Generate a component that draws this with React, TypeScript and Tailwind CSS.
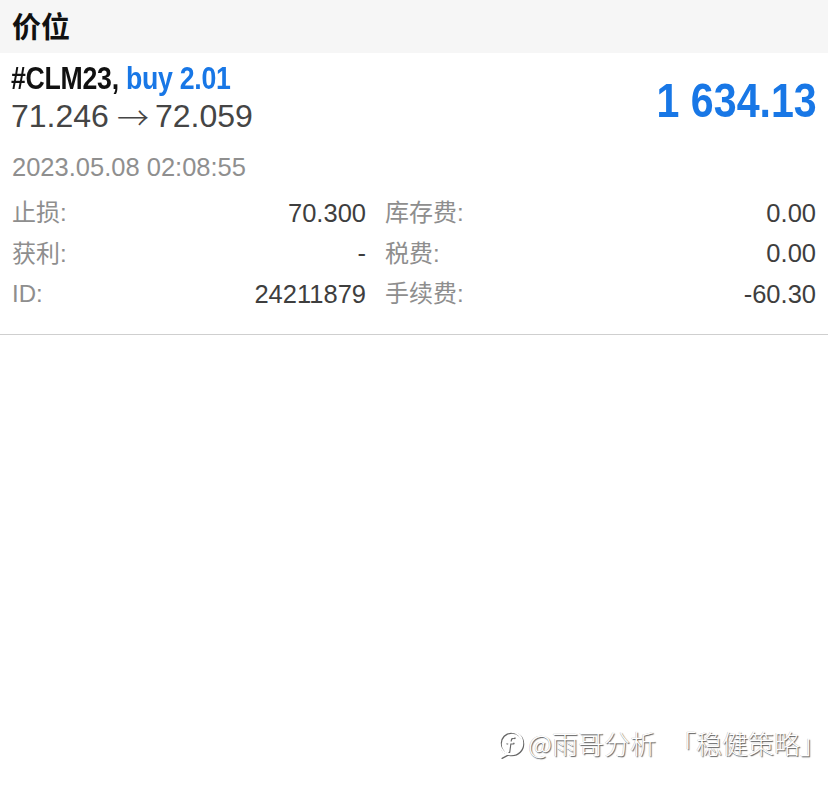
import React from "react";

const sans = "font-['Liberation_Sans','Noto_Sans_CJK_SC',sans-serif]";

const rows = [
  { l1: "止损:", v1: "70.300", l2: "库存费:", v2: "0.00" },
  { l1: "获利:", v1: "-", l2: "税费:", v2: "0.00" },
  { l1: "ID:", v1: "24211879", l2: "手续费:", v2: "-60.30" },
];

const WatermarkLogo = () => (
  <svg width="30" height="34" viewBox="0 0 28 30" fill="none" className="drop-shadow-[1px_1px_0.5px_rgba(0,0,0,0.6)]">
    <path
      d="M9 24.5c-3.5-2-5.5-5.5-5.5-9.5C3.5 9 8 4.5 14 4.5S24.5 9 24.5 15 20 25.5 14 25.5c-1.2 0-2.3-.2-3.3-.5L5 28l2.5-4.2"
      stroke="white"
      strokeWidth="1.9"
      strokeLinejoin="round"
      strokeLinecap="round"
    />
    <path
      d="M16.5 9.5c-1.8-.6-3.4.3-3.6 2.3L11.5 22.5M9.5 14.5h6"
      stroke="white"
      strokeWidth="1.9"
      strokeLinecap="round"
    />
  </svg>
);

export default function App() {
  return (
    <div className={`relative w-[828px] h-[790px] bg-white ${sans}`}>
      <div className="h-[53px] bg-[#f6f6f6] flex items-center px-[12px] pt-[3px]">
        <span className="text-[29px] font-bold text-[#111] leading-none">价位</span>
      </div>

      <div className="flex justify-between items-start px-[11px] pt-[9px]">
        <div className="flex flex-col">
          <div className="h-[32px] flex items-center">
            <span className="inline-block origin-left scale-x-[0.86] whitespace-nowrap text-[31px] font-bold leading-none tracking-[-0.3px]">
              <span className="text-[#111]">#CLM23, </span>
              <span className="text-[#1877e6]">buy 2.01</span>
            </span>
          </div>
          <div className="h-[44px] flex items-center text-[32px] text-[#454545] leading-none whitespace-nowrap">
            <span>71.246</span>
            <span className="font-['Noto_Sans_CJK_SC',sans-serif] font-light text-[32px] ml-[8px] mr-[6px]">→</span>
            <span>72.059</span>
          </div>
        </div>
        <div className="h-[76px] flex items-center">
          <span className="inline-block origin-right scale-x-[0.84] text-[49px] font-bold text-[#1877e6] leading-none whitespace-nowrap">
            1 634.13
          </span>
        </div>
      </div>

      <div className="px-[12px] pt-[14px] h-[46px] flex items-center text-[25.5px] text-[#8f8f8f] leading-none">
        2023.05.08 02:08:55
      </div>

      <div className="flex flex-col px-[12px] pt-[9px] pb-[19px] border-b border-[#cfcfcf]">
        {rows.map((r) => (
          <div key={r.l1} className="h-[40.5px] grid grid-cols-[354px_1fr] items-center text-[24px] leading-none">
            <div className="flex justify-between items-center">
              <span className="text-[#8e8e8e]">{r.l1}</span>
              <span className="text-[#3e3e3e] text-[25.5px]">{r.v1}</span>
            </div>
            <div className="flex justify-between items-center pl-[19px]">
              <span className="text-[#8e8e8e]">{r.l2}</span>
              <span className="text-[#3e3e3e] text-[25.5px]">{r.v2}</span>
            </div>
          </div>
        ))}
      </div>

      <div className="absolute right-[2px] top-[726px] flex items-center gap-[2px]">
        <WatermarkLogo />
        <span className="text-[26px] leading-none text-white whitespace-nowrap font-['Noto_Sans_CJK_SC',sans-serif] font-light [text-shadow:1px_1px_1px_rgba(0,0,0,0.65),-0.5px_-0.5px_0.5px_rgba(0,0,0,0.25)]">
          @雨哥分析<span className="ml-[14px]">「稳健策略」</span>
        </span>
      </div>
    </div>
  );
}
